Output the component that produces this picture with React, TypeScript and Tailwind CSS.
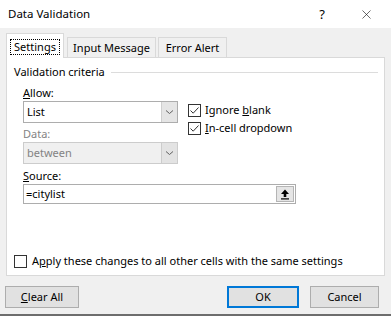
import { X } from 'lucide-react'

function Chevron() {
  return (
    <svg width="9" height="6" viewBox="0 0 9 6" fill="none">
      <path d="M1 1.5 L4.5 4.5 L8 1.5" stroke="#606060" strokeWidth="1" />
    </svg>
  )
}

function Combo({ value, disabled }: { value: string; disabled?: boolean }) {
  return (
    <div
      className={
        'flex h-[22px] w-[155px] items-stretch border ' +
        (disabled ? 'border-[#cccccc] bg-[#f0f0f0] text-[#838383]' : 'border-[#adadad] bg-white text-black')
      }
    >
      <span className="flex flex-1 items-center pl-[3px]">{value}</span>
      <span
        className={
          'flex w-[16px] items-center justify-center border-l ' +
          (disabled ? 'border-[#cccccc] bg-[#e3e3e3]' : 'border-[#cfcfcf] bg-[#e5e5e5]')
        }
      >
        <Chevron />
      </span>
    </div>
  )
}

function Check({ checked }: { checked?: boolean }) {
  return (
    <span className="flex h-[13px] w-[13px] shrink-0 items-center justify-center border border-[#333333] bg-white">
      {checked && (
        <svg width="11" height="11" viewBox="0 0 11 11" fill="none">
          <path d="M1.5 5.5 L4.2 8.2 L9.5 2.5" stroke="#333333" strokeWidth="1" />
        </svg>
      )}
    </span>
  )
}

function Button({ children, width, primary }: { children: React.ReactNode; width: string; primary?: boolean }) {
  return (
    <div
      className={
        'flex h-[22px] items-center justify-center bg-[#e1e1e1] ' +
        width +
        (primary ? ' border-2 border-[#0078d7]' : ' border border-[#adadad]')
      }
    >
      {children}
    </div>
  )
}

export default function App() {
  return (
    <div
      className="flex h-[316px] w-[391px] flex-col border-b-2 border-[#6d6d6d] bg-[#f0f0f0] text-[11px] leading-[16px] text-black"
      style={{ fontFamily: '"Noto Sans", "Open Sans", sans-serif' }}
    >
      <div className="flex h-[28px] shrink-0 items-center bg-white pl-[8px] pr-[17px]">
        <span className="flex-1 text-[11.5px]">Data Validation</span>
        <span className="mr-[34px] text-[13px]">?</span>
        <X size={15} strokeWidth={1} color="#111" />
      </div>

      <div className="ml-[6px] mt-[5px] flex items-end">
        <div className="relative z-10 -mb-px flex h-[25px] w-[58px] items-start justify-center border border-b-0 border-[#d9d9d9] bg-white pt-[5px]">
          <span className="border border-dotted border-black px-[3px] leading-[14px]">Settings</span>
        </div>
        <div className="ml-[3px] flex h-[20px] w-[89px] items-center justify-center border border-b-0 border-[#d9d9d9] bg-[#f0f0f0]">
          Input Message
        </div>
        <div className="ml-[2px] flex h-[20px] w-[69px] items-center justify-center border border-b-0 border-[#d9d9d9] bg-[#f0f0f0]">
          Error Alert
        </div>
      </div>

      <div className="mx-[6px] flex h-[219px] flex-col border border-[#d9d9d9] bg-white pt-[6px]">
        <div className="flex items-center pl-[7px] pr-[6px]">
          <span>Validation criteria</span>
          <span className="ml-[6px] h-px flex-1 bg-[#dcdcdc]" />
        </div>

        <div className="ml-[16px] mt-[5px] flex">
          <div className="flex flex-col">
            <span>
              <u>A</u>llow:
            </span>
            <Combo value="List" />
            <span className="mt-[3px] text-[#838383]">Data:</span>
            <Combo value="between" disabled />
          </div>
          <div className="ml-[10px] mt-[16px] flex flex-col">
            <label className="flex h-[18px] items-center gap-[4px]">
              <Check checked />
              <span>
                Ignore <u>b</u>lank
              </span>
            </label>
            <label className="flex h-[18px] items-center gap-[4px]">
              <Check checked />
              <span>
                <u>I</u>n-cell dropdown
              </span>
            </label>
          </div>
        </div>

        <span className="ml-[16px] mt-[4px]">
          <u>S</u>ource:
        </span>
        <div className="ml-[16px] flex h-[20px] w-[273px] items-stretch border border-[#adadad] bg-white">
          <span className="flex flex-1 items-center pl-[2px]">=citylist</span>
          <span className="m-px flex w-[18px] items-center justify-center border border-[#b5b5b5] bg-[#e5e5e5]">
            <svg width="10" height="11" viewBox="0 0 10 11">
              <path d="M5 0.5 L9 5 L6.3 5 L6.3 8 L3.7 8 L3.7 5 L1 5 Z" fill="#000" />
              <rect x="1" y="9.3" width="8" height="1.2" fill="#000" />
            </svg>
          </span>
        </div>

        <label className="ml-[7px] mt-[49px] flex h-[16px] items-center gap-[5px]">
          <Check />
          <span>
            A<u>p</u>ply these changes to all other cells with the same settings
          </span>
        </label>
      </div>

      <div className="ml-[5px] mr-[12px] mt-[10px] flex items-center">
        <Button width="w-[74px]">
          <span>
            <u>C</u>lear All
          </span>
        </Button>
        <div className="flex-1" />
        <Button width="w-[72px]" primary>
          OK
        </Button>
        <div className="w-[11px]" />
        <Button width="w-[69px]">Cancel</Button>
      </div>
    </div>
  )
}
